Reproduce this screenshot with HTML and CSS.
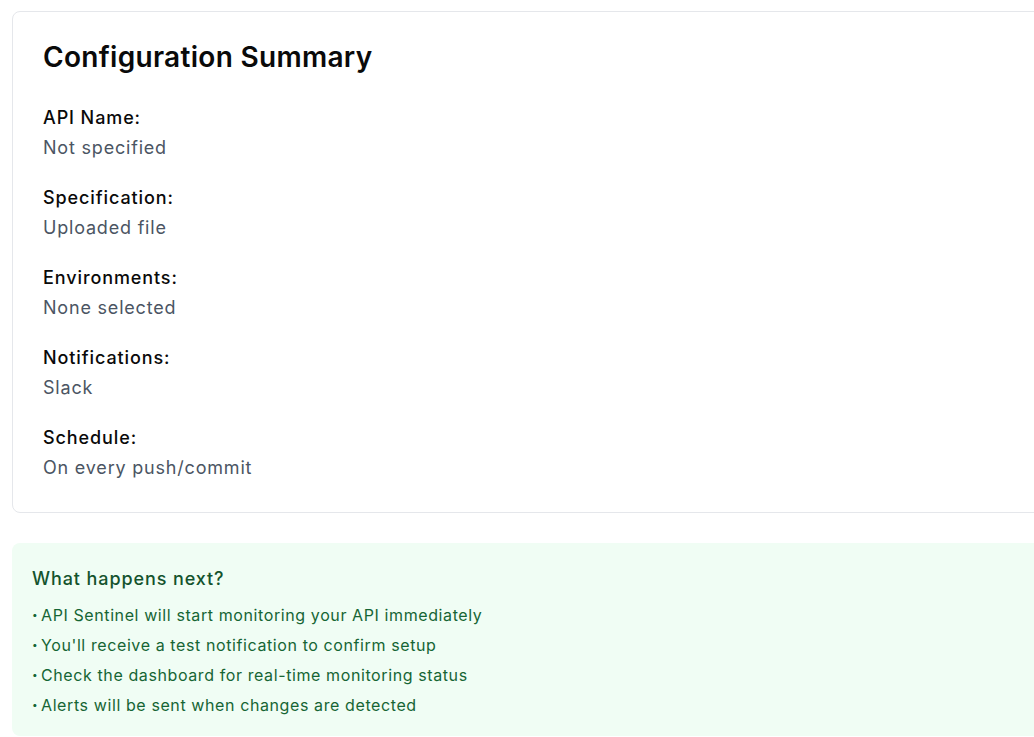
FILE: index.html
```html
<!DOCTYPE html>
<html>
<head>
<meta charset="utf-8">
<link rel="stylesheet" href="styles.css">
</head>
<body>
<div class="page">
  <section class="card">
    <h1 class="title">Configuration Summary</h1>
    <div class="item"><div class="label">API Name:</div><div class="value">Not specified</div></div>
    <div class="item"><div class="label">Specification:</div><div class="value">Uploaded file</div></div>
    <div class="item"><div class="label">Environments:</div><div class="value">None selected</div></div>
    <div class="item"><div class="label">Notifications:</div><div class="value">Slack</div></div>
    <div class="item"><div class="label">Schedule:</div><div class="value">On every push/commit</div></div>
  </section>
  <section class="next">
    <h2 class="next-title">What happens next?</h2>
    <ul class="next-list">
      <li><span class="dot">•</span>API Sentinel will start monitoring your API immediately</li>
      <li><span class="dot">•</span>You'll receive a test notification to confirm setup</li>
      <li><span class="dot">•</span>Check the dashboard for real-time monitoring status</li>
      <li><span class="dot">•</span>Alerts will be sent when changes are detected</li>
    </ul>
  </section>
</div>
</body>
</html>
```

FILE: styles.css
```css
html, body {
  margin: 0;
  padding: 0;
  background: #ffffff;
  overflow: hidden;
}
body {
  font-family: Inter, "Liberation Sans", sans-serif;
  color: #0a0a0a;
}
.page {
  width: 1080px;
  padding: 11px 0 0 12px;
  display: flex;
  flex-direction: column;
  gap: 30px;
}
.card {
  border: 1px solid #e5e7eb;
  border-radius: 8px;
  padding: 30px 30px 29px 30px;
  background: #fff;
}
.title {
  margin: 0 0 30px 0;
  font-size: 28px;
  line-height: 30px;
  font-weight: 600;
  color: #0a0a0a;
  letter-spacing: 0.3px;
}
.item {
  padding-top: 1px;
}
.item + .item {
  margin-top: 19px;
}
.label {
  font-size: 18px;
  line-height: 30px;
  font-weight: 500;
  color: #0a0a0a;
  letter-spacing: 0.9px;
}
.value {
  font-size: 18px;
  line-height: 30px;
  color: #4b5563;
  letter-spacing: 0.8px;
}
.next {
  background: #f0fdf4;
  border-radius: 8px;
  padding: 21px 20px 16px 20px;
}
.next-title {
  margin: 0 0 6px 0;
  font-size: 18px;
  line-height: 30px;
  font-weight: 500;
  color: #14532d;
  letter-spacing: 0.9px;
}
.next-list {
  list-style: none;
  margin: 0;
  padding: 0;
}
.next-list li {
  font-size: 16px;
  line-height: 30px;
  height: 30px;
  color: #166534;
  letter-spacing: 0.6px;
}
.dot {
  display: inline-block;
  width: 9px;
  font-size: 10px;
  line-height: 10px;
  letter-spacing: 0;
  vertical-align: 3px;
}
```
